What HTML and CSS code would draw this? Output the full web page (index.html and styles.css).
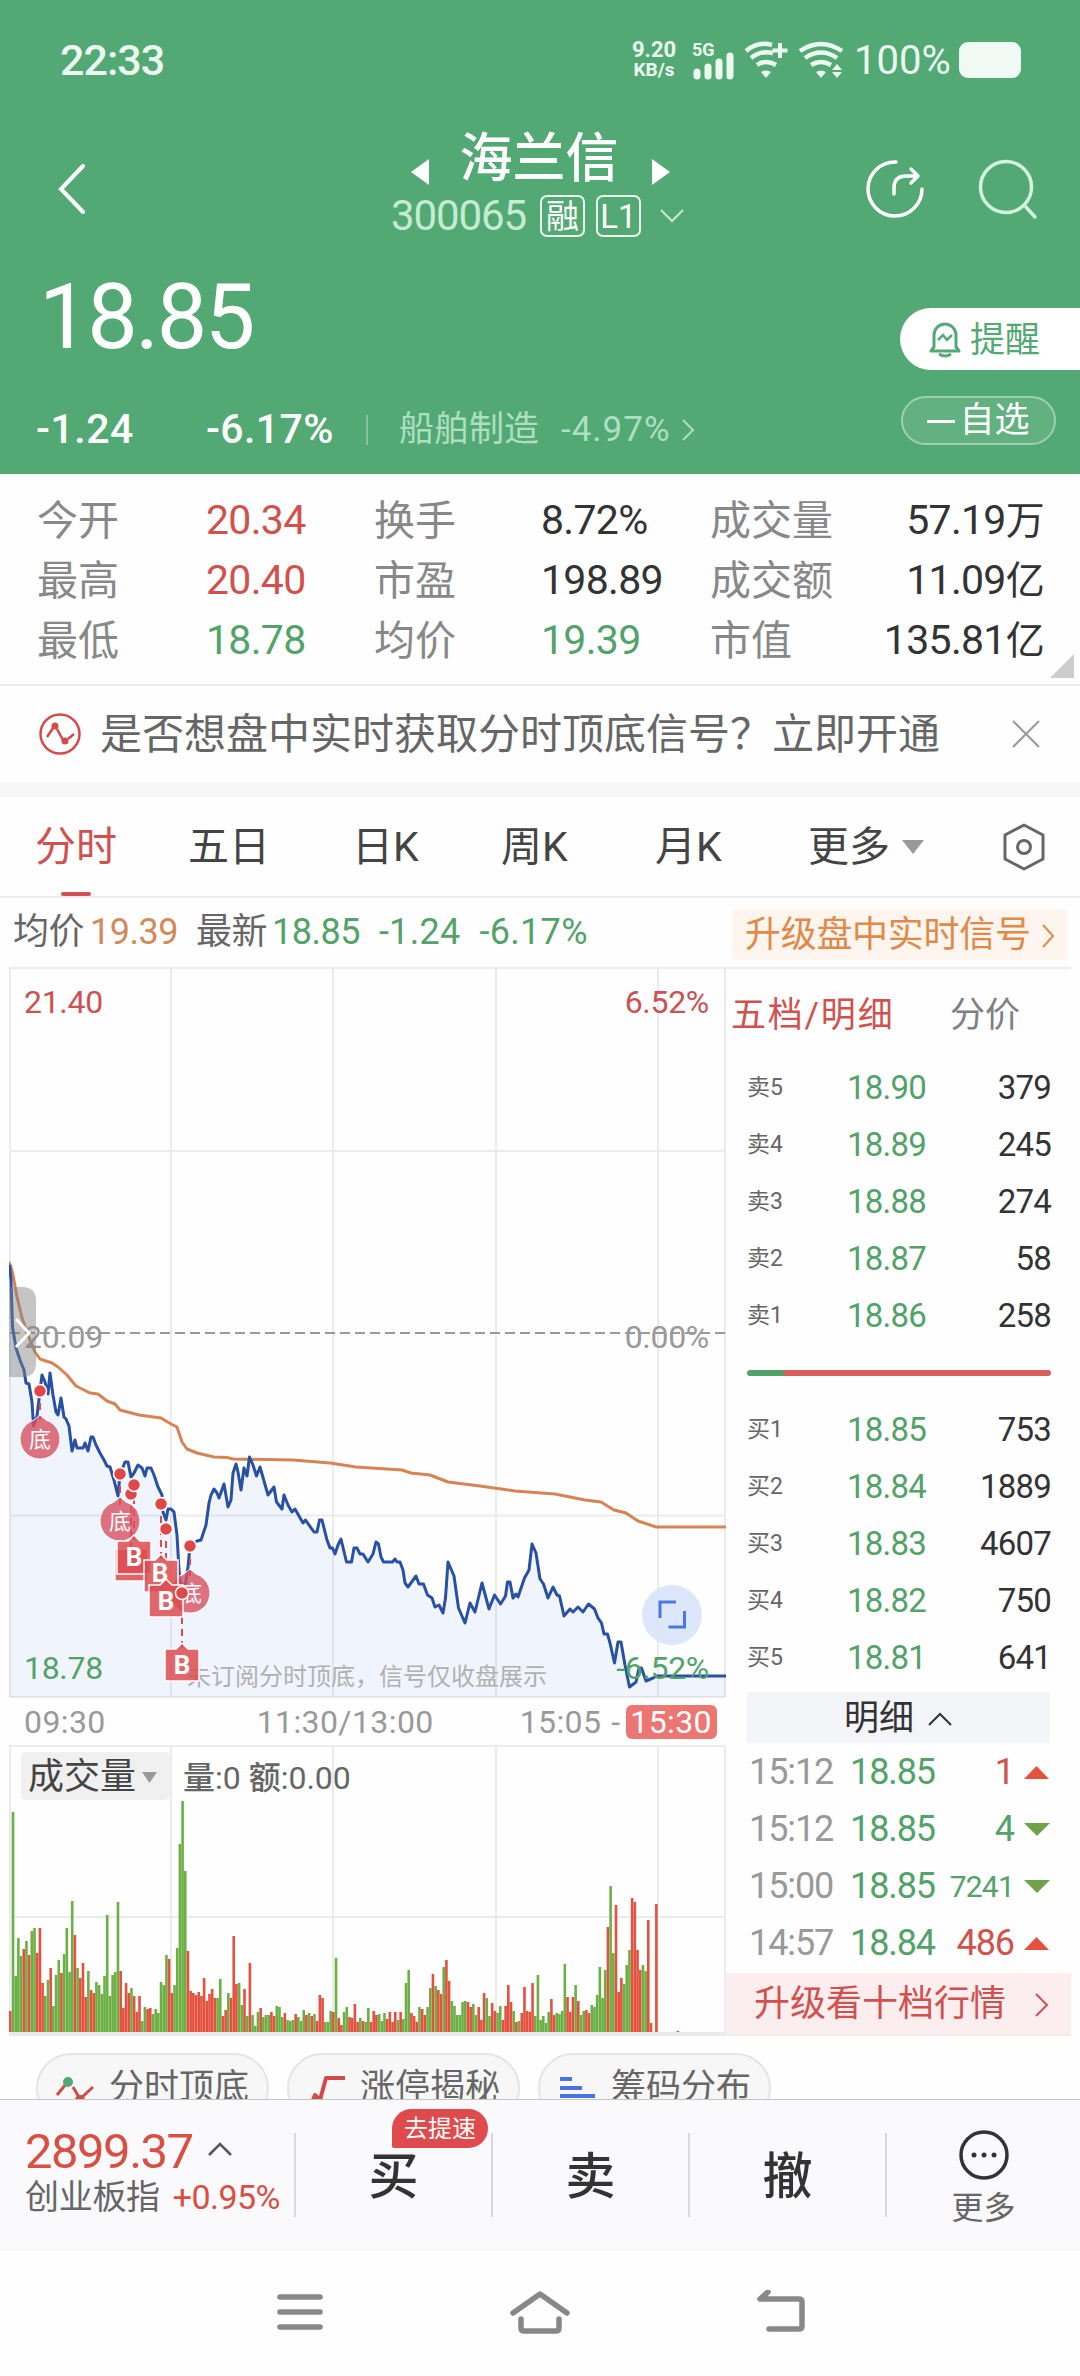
FILE: index.html
```html
<!DOCTYPE html>
<html lang="zh-CN">
  <head>
    <meta charset="utf-8" />
    <meta name="viewport" content="width=device-width, initial-scale=1" />
    <title>海兰信 300065</title>
    <link rel="stylesheet" href="styles.css">
  </head>
  <body>
    <header class="header">
      <div class="status-bar">
        <span class="clock">22:33</span>
        <div class="status-icons">
          <div class="net-speed"><div class="net-num">9.20</div><div>KB/s</div></div>
          <svg class="signal" width="44" height="38" viewBox="0 0 44 38">
            <text x="0" y="15" font-size="18" font-weight="700" fill="#ecf9f0">5G</text>
            <path d="M5 31v4M16 26v9M27 21v14M38 15v20" stroke="#ecf9f0" stroke-width="7" stroke-linecap="round" />
          </svg>
          <svg class="wifi" width="46" height="38" viewBox="0 0 46 38" fill="none" stroke="#ecf9f0" stroke-width="4.500">
            <path d="M2 10Q14 0 28 4M7 17Q17 9 29 12M13 24Q22 18 32 24" />
            <path d="M36 2v15M28.500 9.500h15" stroke-width="4" />
            <path d="M17 31q5 -3 10 0l-5 6z" fill="#ecf9f0" stroke="none" />
          </svg>
          <svg class="wifi" width="46" height="38" viewBox="0 0 46 38" fill="none" stroke="#ecf9f0" stroke-width="4.500">
            <path d="M2 10Q23 -4 44 10M7 17Q23 6 39 17M13 24Q23 18 33 24" />
            <path d="M18 31q5 -3 10 0l-5 6zM34 29l5 -6l5 6zM34 31l5 6l5 -6z" fill="#ecf9f0" stroke="none" />
          </svg>
          <span class="battery-text">100%</span>
          <span class="battery"></span>
        </div>
      </div>

      <div class="title-bar">
        <svg class="back" width="28" height="50" viewBox="0 0 28 50"><path d="M25 2L3 25L25 48" fill="none" stroke="#fff" stroke-width="4" stroke-linecap="round" /></svg>
        <div class="title">
          <div class="title-name">
            <svg width="20" height="28" viewBox="0 0 20 28"><path d="M19 1v26L1 14z" fill="#fff" /></svg>
            <h1>海兰信</h1>
            <svg width="20" height="28" viewBox="0 0 20 28"><path d="M1 1v26L19 14z" fill="#fff" /></svg>
          </div>
          <div class="title-code">
            <span class="code">300065</span>
            <span class="tag">融</span>
            <span class="tag tag-l1">L1</span>
            <svg class="code-arrow" width="26" height="16" viewBox="0 0 26 16"><path d="M2 2l11 11L24 2" fill="none" stroke="#c5ebd3" stroke-width="2" /></svg>
          </div>
        </div>
        <div class="title-actions">
          <svg width="60" height="60" viewBox="0 0 60 60" fill="none" stroke="#fff" stroke-width="3.500" stroke-linecap="round" stroke-linejoin="round">
            <path d="M30 3a27 27 0 1 0 26 27" />
            <path d="M28 35v-6q0 -12 12 -12h12M45 10l7 7l-7 7" />
          </svg>
          <svg width="60" height="62" viewBox="0 0 60 62" fill="none" stroke="#d3f3de" stroke-width="3.500" stroke-linecap="round">
            <circle cx="28" cy="28" r="25.500" />
            <path d="M48 48l9 10" />
          </svg>
        </div>
      </div>

      <div class="price-row">
        <span class="price">18.85</span>
        <div class="remind">
          <svg width="36" height="38" viewBox="0 0 36 38" fill="none" stroke="#53a974" stroke-width="3">
            <path d="M7 27V15a11 11 0 0 1 22 0v12l3 4H4z" stroke-linejoin="round" />
            <path d="M12 34q6 4 12 0" />
            <path d="M11 20l5 -5l4 5l5 -5" stroke-width="2.500" />
          </svg>
          <span>提醒</span>
        </div>
      </div>
      <div class="change-row">
        <span class="chg">-1.24</span>
        <span class="pct">-6.17%</span>
        <span class="bar"></span>
        <span class="sector">船舶制造</span>
        <span class="sector-pct">-4.97%</span>
        <svg width="16" height="24" viewBox="0 0 16 24"><path d="M3 2l10 10L3 22" fill="none" stroke="#addfc0" stroke-width="2" /></svg>
        <div class="fav"><i></i>自选</div>
      </div>
    </header>

    <section class="stats">
      <span class="k">今开</span><span class="v up">20.34</span><span class="k">换手</span><span class="v">8.72%</span><span class="k">成交量</span><span class="v right">57.19<b>万</b></span>
      <span class="k">最高</span><span class="v up">20.40</span><span class="k">市盈</span><span class="v">198.89</span><span class="k">成交额</span><span class="v right">11.09<b>亿</b></span>
      <span class="k">最低</span><span class="v down">18.78</span><span class="k">均价</span><span class="v down">19.39</span><span class="k">市值</span><span class="v right">135.81<b>亿</b></span>
      <i class="corner"></i>
    </section>

    <section class="notice">
      <svg width="44" height="44" viewBox="0 0 44 44" fill="none" stroke="#d44a4a" stroke-width="2.500">
        <circle cx="22" cy="22" r="19.500" />
        <path d="M9 25l6 -9M19 17l6 11M30 27l6 -5" />
        <circle cx="17" cy="14" r="3.500" fill="#d44a4a" stroke="none" />
        <circle cx="27" cy="29" r="3.500" fill="#d44a4a" stroke="none" />
      </svg>
      <span class="notice-text">是否想盘中实时获取分时顶底信号？立即开通</span>
      <svg width="28" height="28" viewBox="0 0 28 28"><path d="M1 1l26 26M27 1L1 27" stroke="#999" stroke-width="2" /></svg>
    </section>

    <nav class="tabs">
      <span class="active">分时</span>
      <span>五日</span>
      <span>日K</span>
      <span>周K</span>
      <span>月K</span>
      <span>更多</span>
      <svg width="22" height="14" viewBox="0 0 22 14"><path d="M0 0h22L11 14z" fill="#999" /></svg>
      <svg width="46" height="50" viewBox="0 0 46 50" fill="none" stroke="#666" stroke-width="3">
        <path d="M23 3L42 13v24L23 47L4 37V13z" stroke-linejoin="round" />
        <circle cx="23" cy="25" r="6.500" />
      </svg>
    </nav>

    <div class="info-line">
      <span>均价</span><span class="avg">19.39</span>
      <span class="latest">最新</span><span class="down">18.85</span><span class="down gap">-1.24</span><span class="down gap">-6.17%</span>
      <div class="upgrade">升级盘中实时信号<svg width="14" height="26" viewBox="0 0 14 26"><path d="M2 2l10 11L2 24" fill="none" stroke="#e08a4a" stroke-width="2" /></svg></div>
    </div>

    <main class="market">
      <div class="charts">
        <svg class="price-chart" width="717" height="731" viewBox="9 967 717 731">
          <g class="grid">
            <path d="M9 968H726M9 1151H726M9 1515.500H726M9 1697H726M10 967V1698M171 967V1698M333 967V1698M496 967V1698M658 967V1698M725 967V1698" />
          </g>
          <path d="M10 1333H726" stroke="#999" stroke-width="2" stroke-dasharray="10 5" />
          <path id="price-area" class="price-area" />
          <polyline id="avg-line" class="avg-line" points="9,1262 11,1267 13,1275 17,1297 22,1318 28,1335 35,1352 40,1359 52,1363 58,1367 67,1375 76,1386 90,1393 98,1394 107,1401 115,1404 120,1410 139,1415 161,1418 171,1424 177,1427 182,1442 187,1449 197,1453 214,1457 227,1457.500 233,1459 293,1460 330,1463 356,1467 402,1470 411,1473 430,1475 448,1482 480,1486 515,1491 555,1494 585,1500 601,1502 614,1510 626,1513 638,1521 656,1527 726,1527" />
          <polyline id="price-line" class="price-line" />

          <g font-size="32" font-weight="450" letter-spacing="-0.300">
            <text x="24" y="1013" fill="#cc5151">21.40</text>
            <text x="709" y="1013" fill="#cc5151" text-anchor="end">6.52%</text>
            <text x="24" y="1348" fill="#999">20.09</text>
            <text x="709" y="1348" fill="#999" text-anchor="end">0.00%</text>
            <text x="24" y="1679" fill="#53a269">18.78</text>
            <text x="709" y="1679" fill="#53a269" text-anchor="end">-6.52%</text>
          </g>
          <text x="187" y="1685" font-size="24" fill="#b0b0b0">未订阅分时顶底，信号仅收盘展示</text>

          <path d="M9 1287h13q14 0 14 14v62q0 14 -14 14h-13z" fill="#808080" opacity="0.450" />
          <path d="M16 1319l13 14l-13 14" fill="none" stroke="#fff" stroke-width="3" />

          <g stroke="#d44a55" stroke-width="2" stroke-dasharray="7 5">
            <path d="M40 1391V1420M120 1474V1505M131 1494V1549M134 1485V1541M161 1504V1560M166 1529V1584M190 1546V1576M182 1593V1649" />
          </g>
          <g class="pin">
            <path d="M34 1420L40 1415L46 1420A20 20 0 1 1 34 1420z" />
            <path d="M114 1502L120 1497L126 1502A20 20 0 1 1 114 1502z" />
            <path d="M184 1574L190 1569L196 1574A20 20 0 1 1 184 1574z" />
          </g>
          <g class="pin-text">
            <text x="40" y="1447">底</text>
            <text x="120" y="1529">底</text>
            <text x="191" y="1601">底</text>
          </g>
          <g class="flag">
            <path d="M115 1549h33v32h-33z" />
            <path d="M117 1541h11l6 -6l6 6h11v33h-34z" />
            <path d="M144 1560h11l6 -6l6 6h11v32h-34z" />
          </g>
          <g class="flag-text">
            <text x="134" y="1566">B</text>
            <text x="160" y="1582">B</text>
          </g>
          <g class="flag">
            <path d="M149 1585h11l6 -6l6 6h11v32h-34z" />
            <path d="M165 1649h11l6 -6l6 6h11v32h-34z" />
          </g>
          <g class="flag-text">
            <text x="166" y="1610">B</text>
            <text x="182" y="1674">B</text>
          </g>
          <g class="dot">
            <circle cx="40" cy="1391" r="6.500" />
            <circle cx="120" cy="1474" r="6.500" />
            <circle cx="131" cy="1494" r="6.500" />
            <circle cx="134" cy="1485" r="6.500" />
            <circle cx="161" cy="1504" r="6.500" />
            <circle cx="166" cy="1529" r="6.500" />
            <circle cx="190" cy="1546" r="6.500" />
            <circle cx="182" cy="1593" r="6.500" />
          </g>

          <circle cx="672" cy="1615" r="30" fill="#d9e4fb" opacity="0.900" />
          <path d="M676 1602h-16v16M684.500 1611v16h-16" fill="none" stroke="#4a78dd" stroke-width="3" />
        </svg>

        <div class="time-axis">
          <span>09:30</span><span class="mid">11:30/13:00</span><span class="late">15:05</span><span class="dash">-</span><span class="close-time">15:30</span>
        </div>

        <svg class="volume-chart" width="717" height="289" viewBox="0 0 717 289">
          <path class="grid" d="M0 1H717M0 172H717M0 288H717M1 0V288M162 0V288M324 0V288M487 0V288M649 0V288M716 0V288" />
          <rect x="12" y="7" width="149" height="48" rx="5" fill="#f0f0f0" />
          <text x="19" y="44" font-size="36" fill="#444">成交量</text>
          <path d="M133 27h15l-7.500 11z" fill="#999" />
          <text x="174" y="44" font-size="32" font-weight="450" fill="#666">量:0 额:0.00</text>
          <g id="volume-bars"></g>
        </svg>
      </div>

      <aside class="orders">
        <div class="order-tabs"><span class="on">五档/明细</span><span>分价</span></div>
        <div class="order-list">
          <div><i>卖5</i><b>18.90</b><em>379</em></div>
          <div><i>卖4</i><b>18.89</b><em>245</em></div>
          <div><i>卖3</i><b>18.88</b><em>274</em></div>
          <div><i>卖2</i><b>18.87</b><em>58</em></div>
          <div><i>卖1</i><b>18.86</b><em>258</em></div>
          <div class="ratio"><span></span></div>
          <div><i>买1</i><b>18.85</b><em>753</em></div>
          <div><i>买2</i><b>18.84</b><em>1889</em></div>
          <div><i>买3</i><b>18.83</b><em>4607</em></div>
          <div><i>买4</i><b>18.82</b><em>750</em></div>
          <div><i>买5</i><b>18.81</b><em>641</em></div>
        </div>
        <div class="detail-head">明细<svg width="26" height="16" viewBox="0 0 26 16"><path d="M2 14L13 3l11 11" fill="none" stroke="#333" stroke-width="2" /></svg></div>
        <div class="ticks">
          <div><i>15:12</i><b>18.85</b><em class="up">1</em><svg width="26" height="13" viewBox="0 0 26 13"><path d="M0 13h25L12.500 0z" fill="#e5513f" /></svg></div>
          <div><i>15:12</i><b>18.85</b><em class="down">4</em><svg width="26" height="13" viewBox="0 0 26 13"><path d="M0 0h26L13 13z" fill="#70a14b" /></svg></div>
          <div><i>15:00</i><b>18.85</b><em class="down small">7241</em><svg width="26" height="13" viewBox="0 0 26 13"><path d="M0 0h26L13 13z" fill="#70a14b" /></svg></div>
          <div><i>14:57</i><b>18.84</b><em class="up">486</em><svg width="26" height="13" viewBox="0 0 26 13"><path d="M0 13h25L12.500 0z" fill="#e5513f" /></svg></div>
        </div>
        <div class="level2">升级看十档行情<svg width="16" height="26" viewBox="0 0 16 26"><path d="M2 2l11 11L2 24" fill="none" stroke="#d1514f" stroke-width="2" /></svg></div>
      </aside>
    </main>

    <div class="chips">
      <div class="chip">
        <svg width="40" height="34" viewBox="0 0 40 34" fill="none" stroke="#d44a4a" stroke-width="3"><path d="M2 24l9 -11M18 16l7 12l13 -12" /><circle cx="13" cy="11" r="5" fill="#53a974" stroke="none" /><circle cx="25" cy="29" r="5" fill="#d44a4a" stroke="none" /></svg>
        分时顶底
      </div>
      <div class="chip">
        <svg width="40" height="34" viewBox="0 0 40 34" fill="none" stroke="#d44a4a" stroke-width="4"><path d="M5 34l4 -10l5 5l6 -22h19" stroke-linejoin="round" /></svg>
        涨停揭秘
      </div>
      <div class="chip">
        <svg width="40" height="34" viewBox="0 0 40 34" stroke="#4a73dd" stroke-width="4"><path d="M3 8h12M3 17h22M3 25h35M3 33h22" /></svg>
        筹码分布
      </div>
    </div>

    <footer class="trade-bar">
      <div class="index">
        <div class="index-value">2899.37<svg width="26" height="16" viewBox="0 0 26 16"><path d="M2 14L13 3l11 11" fill="none" stroke="#555" stroke-width="2.500" /></svg></div>
        <div class="index-name">创业板指<span>+0.95%</span></div>
      </div>
      <div class="trade">买<span class="badge">去提速</span></div>
      <div class="trade">卖</div>
      <div class="trade">撤</div>
      <div class="more">
        <svg width="52" height="52" viewBox="0 0 52 52"><circle cx="26" cy="26" r="23" fill="none" stroke="#333" stroke-width="3.500" /><g fill="#333"><circle cx="16" cy="26" r="2.500" /><circle cx="26" cy="26" r="2.500" /><circle cx="36" cy="26" r="2.500" /></g></svg>
        <span>更多</span>
      </div>
    </footer>

    <div class="sys-nav">
      <svg width="46" height="46" viewBox="0 0 46 46"><path d="M3 7h40M3 22h40M3 37h40" stroke="#888" stroke-width="5.500" stroke-linecap="round" /></svg>
      <svg width="60" height="46" viewBox="0 0 60 46" fill="none" stroke="#888" stroke-width="5.500" stroke-linecap="round" stroke-linejoin="round"><path d="M3 23L30 4l27 19" /><path d="M11 29v9q0 3 3 3h32q3 0 3 -3v-9" /></svg>
      <svg width="50" height="46" viewBox="0 0 50 46" fill="none" stroke="#888" stroke-width="5.500" stroke-linecap="round" stroke-linejoin="round"><path d="M12 2L4 9h39q3 0 3 3v24q0 3 -3 3H13" /></svg>
    </div>

    <script src="script.js"></script>
  </body>
</html>
```
FILE: styles.css
```css
* {
  box-sizing: border-box;
}

body {
  margin: 0;
  width: 1080px;
  height: 2376px;
  overflow: hidden;
  background-color: #fefefe;
  font-family: Roboto, "Noto Sans CJK SC", sans-serif;
  line-height: 1.2;
  color: #333;
}

svg {
  display: block;
  flex: none;
}

i, em {
  font-style: normal;
}

.up {
  color: #d1514b;
}

.down {
  color: #53a269;
}

/* header */
.header {
  height: 474px;
  background-color: #53a974;
  color: #fff;
}

.status-bar {
  display: flex;
  justify-content: space-between;
  align-items: center;
  height: 120px;
  padding: 0 60px 0 60px;
}

.clock {
  padding-top: 1px;
  font-size: 43px;
  font-weight: 500;
  letter-spacing: -1px;
  color: #ecf9f0;
}

.status-icons {
  display: flex;
  align-items: center;
  color: #ecf9f0;
}

.net-speed {
  width: 48px;
  font-size: 19px;
  font-weight: 700;
  line-height: 20px;
  text-align: center;
}

.net-num {
  font-size: 22px;
}

.signal {
  margin-left: 14px;
  overflow: visible;
}

.wifi {
  margin-left: 8px;
}

.battery-text {
  margin-left: 10px;
  width: 96px;
  padding-top: 1px;
  font-size: 40px;
  font-weight: 450;
}

.battery {
  width: 62px;
  height: 36px;
  margin-left: 9px;
  margin-right: -1px;
  border-radius: 9px;
  background-color: #f1f9f4;
}

.title-bar {
  display: grid;
  grid-template-columns: 330px 420px 1fr;
  height: 140px;
}

.back {
  margin: 44px 0 0 58px;
}

.title {
  padding-top: 4px;
}

.title-name {
  display: flex;
  justify-content: center;
  align-items: center;
  height: 66px;
}

.title-name svg {
  margin-top: 30px;
}

.title-name h1 {
  margin: 0 32px 0 30px;
  padding-top: 5px;
  font-size: 53px;
  font-weight: 500;
}

.title-code {
  display: flex;
  align-items: center;
  height: 50px;
  margin-top: 1px;
  padding-left: 61px;
}

.code {
  width: 149px;
  padding-top: 1px;
  font-size: 42px;
  letter-spacing: -1.1px;
  color: #c5ebd3;
}

.tag {
  width: 45px;
  height: 42px;
  margin-right: 11px;
  border: 2px solid #ecf9f0;
  border-radius: 7px;
  font-size: 33px;
  line-height: 39px;
  text-align: center;
}

.code-arrow {
  margin-left: 7px;
}

.title-actions {
  display: flex;
  gap: 52px;
  padding: 39px 0 0 116px;
}

.price-row {
  display: flex;
  justify-content: space-between;
  height: 123px;
  padding-left: 39px;
}

.price {
  margin-top: 2px;
  font-size: 90px;
  font-weight: 450;
  line-height: 112px;
  letter-spacing: -2.4px;
}

.remind {
  display: flex;
  align-items: center;
  width: 180px;
  height: 62px;
  margin-top: 48px;
  padding-left: 27px;
  border-radius: 31px 0 0 31px;
  background-color: #fff;
  color: #53a974;
  font-size: 35px;
}

.remind span {
  margin-left: 7px;
  padding-top: 3px;
}

.change-row {
  display: flex;
  align-items: center;
  height: 92px;
  padding-top: 2px;
  padding-left: 36px;
  font-size: 41px;
}

.chg,
.pct {
  font-weight: 500;
}

.chg {
  width: 170px;
  letter-spacing: 0.5px;
}

.pct {
  width: 160px;
  letter-spacing: 0.4px;
}

.bar {
  width: 2px;
  height: 30px;
  background-color: #86c39d;
}

.sector,
.sector-pct {
  color: #addfc0;
  font-size: 35px;
}

.sector {
  width: 162px;
  margin-left: 31px;
}

.sector-pct {
  width: 119px;
  letter-spacing: 1px;
}

.fav {
  display: flex;
  justify-content: center;
  align-items: center;
  gap: 4px;
  width: 155px;
  height: 49px;
  margin: -20px 0 0 205px;
  padding-top: 2px;
  border: 2px solid #9dd0b0;
  border-radius: 25px;
  background-color: #63b181;
  font-size: 35px;
}

.fav i {
  width: 28px;
  height: 3px;
  background-color: #fff;
}

/* quote numbers */
.stats {
  position: relative;
  display: grid;
  grid-template-columns: 169px 168px 167px 169px 122px 212px;
  grid-auto-rows: 60px;
  align-items: center;
  height: 212px;
  padding: 17px 0 0 37px;
  border-bottom: 2px solid #ebebeb;
}

.k {
  padding-top: 1px;
  font-size: 41px;
  color: #888;
  white-space: nowrap;
}

.v {
  font-size: 41px;
  font-weight: 450;
  letter-spacing: -0.7px;
}

.v b {
  font-size: 39px;
  font-weight: 400;
}

.right {
  text-align: right;
}

.corner {
  position: absolute;
  right: 6px;
  bottom: 6px;
  border-left: 24px solid transparent;
  border-bottom: 24px solid #ccc;
}

.notice {
  display: flex;
  align-items: center;
  height: 111px;
  padding: 0 40px 0 38px;
  border-bottom: 15px solid #f7f7f7;
}

.notice-text {
  flex: 1;
  margin-left: 18px;
  padding-top: 3px;
  font-size: 42px;
  color: #666;
}

/* period tabs */
.tabs {
  display: grid;
  grid-template-columns: 153px 164px 149px 154px 153px 94px 99px 46px;
  align-items: center;
  height: 101px;
  padding-left: 35px;
  border-bottom: 2px solid #ebebeb;
  font-size: 41px;
  color: #444;
}

.tabs span {
  padding-top: 3px;
}

.tabs .active {
  position: relative;
  color: #d1514f;
}

.active::after {
  content: "";
  position: absolute;
  left: 26px;
  bottom: -23px;
  width: 30px;
  height: 4px;
  border-radius: 2px;
  background-color: #d1514f;
}

.info-line {
  display: flex;
  align-items: center;
  height: 69px;
  padding-left: 13px;
  font-size: 36px;
  letter-spacing: -0.5px;
  color: #666;
}

.avg {
  margin-left: 6px;
  color: #d28a5c;
}

.latest {
  margin: 0 5px 0 18px;
}

.gap {
  margin-left: 19px;
  letter-spacing: 0.3px;
}

.upgrade {
  display: flex;
  align-items: center;
  justify-content: space-between;
  width: 336px;
  height: 51px;
  margin: 4px 12px 0 auto;
  padding: 2px 13px 0;
  border-radius: 6px;
  background-color: #fdf5ee;
  color: #e08a4a;
  letter-spacing: -0.3px;
}

/* charts */
.market {
  display: flex;
  height: 1069px;
  margin: 0 9px;
  border-bottom: 3px solid #ebebeb;
}

.charts {
  width: 717px;
}

.grid {
  fill: none;
  stroke: #ebebeb;
  stroke-width: 2;
}

.price-area {
  fill: #4a86f0;
  opacity: 0.08;
}

.price-line {
  fill: none;
  stroke: #2850a5;
  stroke-width: 3;
  stroke-linejoin: round;
}

.avg-line {
  fill: none;
  stroke: #d78454;
  stroke-width: 3;
  stroke-linejoin: round;
}

.pin path {
  fill: #d9505f;
  fill-opacity: 0.8;
  stroke: #fff;
  stroke-width: 1;
}

.pin-text {
  font-size: 22px;
  fill: #fff;
  text-anchor: middle;
}

.flag path {
  fill: #dd4c50;
  fill-opacity: 0.85;
  stroke: #fff;
  stroke-width: 1.5;
}

.flag-text {
  font-size: 26px;
  font-weight: 700;
  fill: #fff;
  text-anchor: middle;
}

.dot circle {
  fill: #e04848;
  stroke: #fff;
  stroke-width: 1.5;
}

.time-axis {
  display: flex;
  align-items: center;
  height: 47px;
  padding: 1px 0 0 15px;
  font-size: 32px;
  letter-spacing: 0.4px;
  color: #999;
}

.mid {
  margin-left: 151px;
}

.late {
  margin-left: 86px;
}

.dash {
  margin-left: 10px;
}

.close-time {
  width: 91px;
  height: 34px;
  margin-left: 5px;
  border-radius: 6px;
  background-color: #ec7672;
  color: #fff;
  font-weight: 450;
  line-height: 34px;
  text-align: center;
}

/* order book */
.orders {
  width: 345px;
  border-top: 2px solid #ebebeb;
}

.order-tabs {
  display: flex;
  justify-content: space-between;
  align-items: center;
  height: 90px;
  padding: 3px 51px 0 5px;
  font-size: 35px;
  color: #808080;
}

.order-tabs .on {
  letter-spacing: 1.8px;
  color: #d1514f;
}

.order-list {
  padding: 0 20px 0 21px;
}

.order-list div {
  display: grid;
  grid-template-columns: 100px 1fr 1fr;
  align-items: center;
  height: 57px;
}

.order-list i {
  padding-top: 1px;
  font-size: 23px;
  color: #666;
}

.order-list b,
.order-list em {
  font-size: 33px;
  font-weight: 450;
  letter-spacing: -0.8px;
}

.order-list b {
  color: #53a269;
}

.order-list em {
  text-align: right;
}

.order-list .ratio {
  display: flex;
}

.ratio span {
  flex: 1;
  height: 6px;
  border-radius: 3px;
  background: linear-gradient(to right, #53a269 37px, #d95f5a 37px);
}

.detail-head {
  display: flex;
  justify-content: center;
  align-items: center;
  gap: 13px;
  width: 303px;
  height: 51px;
  margin: 6px 0 0 21px;
  padding-top: 2px;
  background-color: #f4f5f9;
  font-size: 35px;
}

.ticks {
  padding: 1px 21px 0 23px;
}

.ticks div {
  display: grid;
  grid-template-columns: 101px 1fr 72px 26px;
  align-items: center;
  height: 57px;
  font-size: 36px;
  letter-spacing: -1.1px;
}

.ticks i {
  color: #999;
}

.ticks b,
.ticks em {
  font-weight: 450;
}

.ticks b {
  color: #53a269;
}

.ticks em {
  display: flex;
  justify-content: flex-end;
  padding-right: 10px;
}

.ticks .small {
  font-size: 30px;
  letter-spacing: -0.8px;
}

.level2 {
  display: flex;
  justify-content: space-between;
  align-items: center;
  height: 61px;
  margin-top: 1px;
  padding: 2px 21px 0 28px;
  background-color: #fceeee;
  color: #d1514f;
  font-size: 36px;
}

/* chips, cut off by the trade bar */
.chips {
  display: flex;
  gap: 18px;
  height: 63px;
  padding: 17px 36px 0;
  overflow: hidden;
}

.chip {
  display: flex;
  align-items: center;
  flex: none;
  gap: 14px;
  width: 233px;
  height: 70px;
  padding-left: 17px;
  border: 2px solid #e5e5e5;
  border-radius: 35px;
  background-color: #f7f7f7;
  color: #666;
  font-size: 35px;
}

.trade-bar {
  display: flex;
  height: 152px;
  padding-top: 2px;
  border-top: 1px solid #c4c4c4;
  background-color: #fafafc;
}

.index {
  width: 294px;
  padding: 21px 0 0 25px;
}

.index-value {
  display: flex;
  align-items: center;
  height: 58px;
  font-size: 49px;
  font-weight: 450;
  letter-spacing: -1.5px;
  color: #d94f43;
}

.index-value svg {
  margin: -7px 0 0 14px;
}

.index-name {
  height: 36px;
  font-size: 34px;
  line-height: 32px;
  letter-spacing: -0.3px;
  color: #666;
}

.index-name span {
  margin-left: 13px;
  letter-spacing: -0.6px;
  color: #d94f43;
}

.trade,
.more {
  position: relative;
  height: 84px;
  margin-top: 31px;
  border-left: 2px solid #d9d9dc;
}

.trade {
  width: 197px;
  font-size: 50px;
  font-weight: 500;
  line-height: 89px;
  text-align: center;
}

.badge {
  position: absolute;
  left: 96px;
  top: -24px;
  width: 96px;
  height: 39px;
  border-radius: 20px 20px 20px 2px;
  background-color: #df4a4c;
  color: #fff;
  font-size: 24px;
  font-weight: 400;
  line-height: 40px;
}

.more {
  flex: 1;
  display: flex;
  flex-direction: column;
  align-items: center;
  font-size: 32px;
  color: #666;
}

.more svg {
  margin-top: -4px;
}

.more span {
  margin-top: 8px;
}

.sys-nav {
  display: flex;
  justify-content: space-between;
  height: 125px;
  padding: 39px 274px 0 277px;
}
```
FILE: script.js
```js
// intraday price points, x,y pairs in chart coordinates
const prices = "9.5,1265 11,1280 12.5,1327 16,1348 20,1360 24,1370 26,1383 29,1384 32,1402 33.5,1426 37,1416 40,1391 42,1375 45,1382 48,1394 50,1373 53,1395 56,1412 58,1415 61,1398 64,1417 66,1419 69,1426 72,1451 75,1440 77,1448 83,1448 85,1443 88,1451 91,1437 93,1437 96,1445 100,1453 104,1460 107,1466 110,1467 114,1480 118,1496 120,1474 123,1467 125,1462 128,1462 131,1477 134,1473 138,1465 142,1468 145,1476 147,1468 151,1468 154,1475 158,1487 162,1495 163,1512 166,1520 168,1509 171,1509 174,1512 177,1535 179,1570 180,1582 185,1587 188,1567 190,1546 197,1541 201,1540 206,1525 209,1503 211,1495 214,1489 217,1493 219,1498 224,1484 228,1507 231,1500 233,1473 236,1464 238,1472 241,1490 244,1468 247,1476 249.5,1457 253,1465 256.5,1476 260,1467 268,1495 274,1487 276.5,1502 282,1509 284,1495 288,1505 292,1512 295,1509 303,1523 305.5,1520 314,1532 317,1532 319.5,1520 322,1520 327,1540 330,1548 332.5,1548 335,1554 338,1545 341,1539 346.5,1562 351.5,1562 354,1548 357,1548 360,1554 363,1554 368,1562 373,1554 376,1542 378.5,1544 381,1557 383.5,1562 392.5,1562 395,1559 397,1562 400,1562 403,1570 405,1583 408,1587 416,1576 419,1584 423.5,1584 427.5,1595 432,1598 435,1607 439,1605 443,1613 445.5,1598 448,1562 454,1576 458.5,1608 465,1623 470,1603 475,1612 482,1583 489,1609 494.5,1595 500.5,1604 505.5,1596 507.5,1582 510,1582 513,1598 516,1594 518,1597 524.5,1578 529,1570 532,1544 536,1553 540,1579 543.5,1584 548,1598 553,1587 557,1595 559.5,1596 564,1616 570,1609 573,1612 578,1607 583,1612 588.5,1604 594.5,1609 598,1618 601.5,1623 604,1634 607.5,1634 610,1643 614.5,1663 618,1642 621,1642 625,1665 629.5,1687 636,1682 639,1668 641.5,1668 646,1681 653,1678 657,1676 726,1676";

document.getElementById("price-line").setAttribute("points", prices);
document.getElementById("price-area").setAttribute("d", "M" + prices.split(" ").join("L") + "V1697H9.5z");

// one entry per minute: r = up, g = down, then bar height
const volumes = "r21 g220 g56 g94 g76 r83 g91 r77 g101 g104 r79 r104 r49 g36 g52 r64 g26 g57 g72 r59 g78 g104 g60 g131 r97 g64 r54 r69 r35 g61 r42 r39 g50 g47 g38 g56 g117 g36 g57 g60 g130 r61 r24 r49 r39 g44 r36 r20 r36 g11 g25 r23 r24 g18 g23 g19 g50 g47 g77 r73 r39 g47 g84 g188 g231 g161 r81 r41 r39 r37 r40 r36 r54 r31 r38 r43 r34 g34 g53 r16 r22 g39 r34 r96 r48 g49 g27 r43 g16 r69 g17 g6 g20 r24 g15 g17 g17 r20 r16 g26 g25 g15 r19 g12 g11 g12 r18 g15 g11 g22 r17 g19 r16 g18 r11 r37 r34 g10 g10 g21 r20 g74 r14 r7 g20 g25 r15 r14 r28 r10 g14 r11 g10 g24 r10 r21 r17 g18 g11 g19 r13 r20 r10 r20 g12 r20 g13 g49 g62 r19 r16 r10 g25 r23 r17 g25 g44 r58 g46 r42 r38 g65 r72 r51 g31 g26 g17 g17 g30 g31 r30 r25 g28 g17 r25 r12 r39 g34 g16 r29 r21 g19 g26 r12 r26 r47 r30 g21 r10 g11 r19 r45 r21 r20 r49 g16 g57 g12 g16 g9 g20 r33 r17 g19 g18 g21 g68 r35 r20 r35 g47 r31 g17 g21 r22 r19 g27 g25 g37 g65 g34 g62 r105 g146 g79 r127 r40 r54 g48 g67 g82 r134 r130 r82 r62 g67 g61 r112 r9 r0 r128";

const bars = document.getElementById("volume-bars");
let i = 0;
for (const item of (volumes + " r0 r0 r0 r0 r0 r0 r0 r1").split(" ")) {
  const height = Number(item.slice(1));
  const bar = document.createElementNS("http://www.w3.org/2000/svg", "rect");
  bar.setAttribute("x", i * 2.692);
  bar.setAttribute("y", 287 - height);
  bar.setAttribute("width", 2.6);
  bar.setAttribute("height", height);
  bar.setAttribute("fill", item[0] === "r" ? "#e5513f" : "#6cb044");
  bars.appendChild(bar);
  i++;
}
```
